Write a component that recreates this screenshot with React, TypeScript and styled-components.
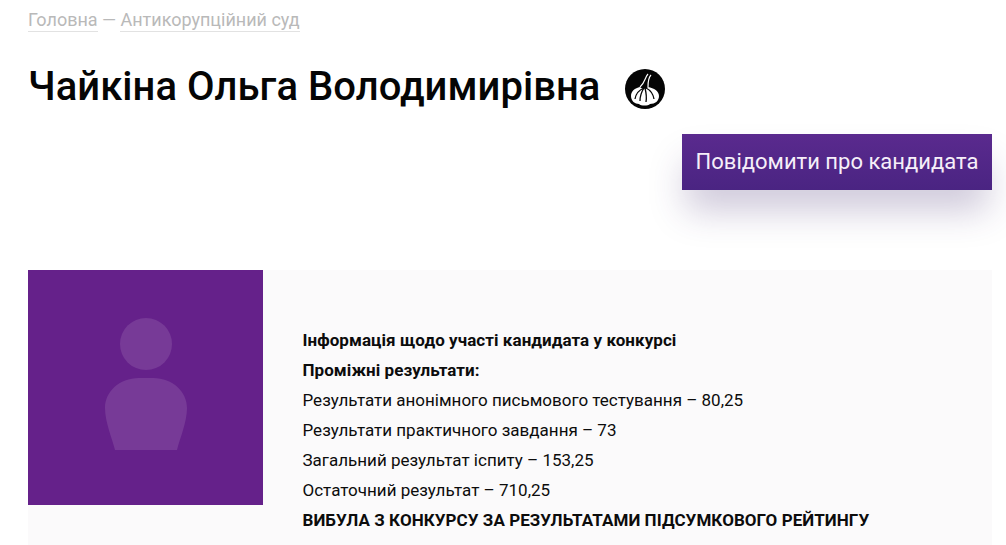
import styled, { createGlobalStyle } from 'styled-components';

const GlobalStyle = createGlobalStyle`
  html, body {
    margin: 0;
    padding: 0;
    background: #ffffff;
    overflow: hidden;
  }
  body {
    font-family: Roboto, "Liberation Sans", sans-serif;
  }
`;

const Page = styled.div`
  width: 1006px;
  height: 545px;
  overflow: hidden;
  padding: 0 14px 0 28px;
  box-sizing: border-box;
`;

const Breadcrumbs = styled.nav`
  display: flex;
  gap: 4.4px;
  padding-top: 8px;
  height: 24px;
  font-size: 18px;
  line-height: 23px;
  color: #b9b9b9;
`;

const Crumb = styled.a`
  height: 23px;
  border-bottom: 1px solid #e2e2e2;
`;

const TitleRow = styled.div`
  display: flex;
  align-items: center;
  gap: 25px;
  margin-top: 20px;
  height: 70px;
`;

const Title = styled.h1`
  margin: 0;
  font-size: 40px;
  font-weight: 500;
  line-height: 70px;
  letter-spacing: 0.04px;
  color: #050505;
`;

const GarlicIcon = styled.svg`
  width: 40px;
  height: 40px;
  flex: none;
  margin-top: 4px;
`;

const Actions = styled.div`
  display: flex;
  justify-content: flex-end;
  margin-top: 12px;
`;

const ReportButton = styled.button`
  width: 310px;
  height: 56px;
  padding: 0 0 2px;
  border: 0;
  font-family: inherit;
  font-size: 22px;
  color: #f6eff9;
  background: linear-gradient(#5a2a8e, #4a2482);
  box-shadow: 0 24px 36px -4px rgba(62, 40, 110, 0.26);
`;

const Card = styled.section`
  display: flex;
  margin-top: 80px;
  background: #fbfafb;
  height: 275px;
`;

const Avatar = styled.div`
  width: 235px;
  height: 235px;
  flex: none;
  display: flex;
  align-items: flex-start;
  justify-content: center;
  padding: 48px 0 0 1px;
  box-sizing: border-box;
  background: #65218a;
`;

const Info = styled.div`
  padding: 55px 0 0 39.5px;
  font-size: 17px;
  line-height: 30px;
  color: #0c0c0c;
`;

const Line = styled.div<{ $bold?: boolean }>`
  font-weight: ${(p) => (p.$bold ? 700 : 400)};
  letter-spacing: ${(p) => (p.$bold ? '0.06px' : '0')};
`;

const App = () => {
  return (
    <>
      <GlobalStyle />
      <Page>
        <Breadcrumbs>
          <Crumb>Головна</Crumb>
          <span>—</span>
          <Crumb>Антикорупційний суд</Crumb>
        </Breadcrumbs>
        <TitleRow>
          <Title>Чайкіна Ольга Володимирівна</Title>
          <GarlicIcon viewBox="0 0 40 40">
            <circle cx="20" cy="20" r="20" fill="#050505" />
            <path
              d="M15 18 C10 19 6 22 6 27 C6 32 10 35 14 35 C16 37 23 37 25 35 C30 35 34 32 34 27 C34 22 29 19 23 18 C21 20 17 20 15 18 Z"
              fill="#fff"
            />
            <path
              d="M23 5 C20 8 20 14 15 18 M26 6 C23 9 23 14 23 18"
              fill="none"
              stroke="#fff"
              strokeWidth="1.2"
            />
            <path
              d="M19 19 C14 21 11 24 10 30 M19 19 C17 22 15 26 15 32 M20 19 C21 23 22 27 21 33 M21 19 C25 21 28 24 29 30"
              fill="none"
              stroke="#050505"
              strokeWidth="1.3"
            />
          </GarlicIcon>
        </TitleRow>
        <Actions>
          <ReportButton>Повідомити про кандидата</ReportButton>
        </Actions>
        <Card>
          <Avatar>
            <svg width="82" height="132" viewBox="0 0 82 132">
              <circle cx="41" cy="26" r="26" fill="#773a97" />
              <path
                d="M34 60 H48 C68 60 82 74 82 90 C82 104 75 120 72 132 H10 C7 120 0 104 0 90 C0 74 14 60 34 60 Z"
                fill="#773a97"
              />
            </svg>
          </Avatar>
          <Info>
            <Line $bold>Інформація щодо участі кандидата у конкурсі</Line>
            <Line $bold>Проміжні результати:</Line>
            <Line>Результати анонімного письмового тестування – 80,25</Line>
            <Line>Результати практичного завдання – 73</Line>
            <Line>Загальний результат іспиту – 153,25</Line>
            <Line>Остаточний результат – 710,25</Line>
            <Line $bold>ВИБУЛА З КОНКУРСУ ЗА РЕЗУЛЬТАТАМИ ПІДСУМКОВОГО РЕЙТИНГУ</Line>
          </Info>
        </Card>
      </Page>
    </>
  );
};

export default App;
